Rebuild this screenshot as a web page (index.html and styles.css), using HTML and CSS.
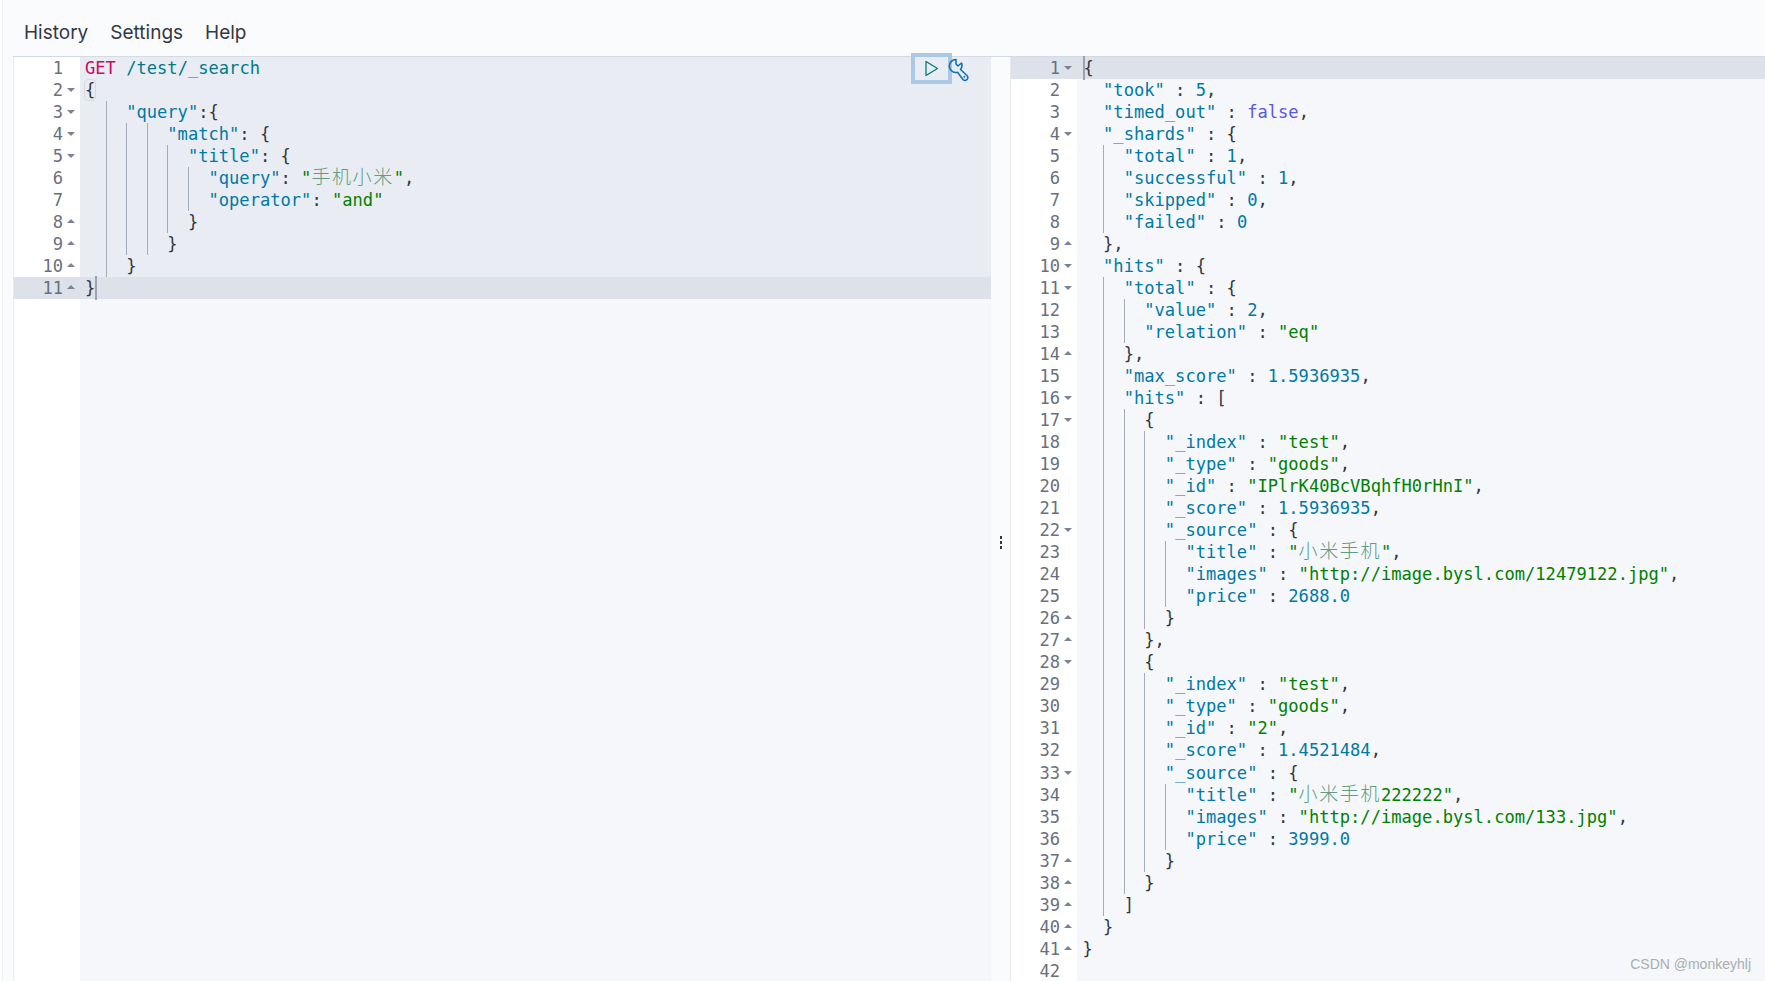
FILE: index.html
```html
<!DOCTYPE html>
<html lang="en">
<head>
    <meta charset="UTF-8">
    <title>Console - Dev Tools</title>
    <link rel="stylesheet" href="styles.css">
</head>
<body>
<div class="app">
    <div class="menu">
        <span>History</span>
        <span>Settings</span>
        <span>Help</span>
    </div>
    <div class="panes">
        <div class="pane left">
            <div class="row sel"><span class="gut"><span>1</span><i class="fd"></i></span><span class="code"><span class="tx"><span class="m">GET</span> <span class="u">/test/_search</span></span></span></div>
            <div class="row sel"><span class="gut"><span>2</span><i class="fd dn"></i></span><span class="code"><span class="tx"><span class="br">{</span></span></span></div>
            <div class="row sel"><span class="gut"><span>3</span><i class="fd dn"></i></span><span class="code"><i class="t"></i><i class="t"></i><span class="tx"><span class="k">"query"</span>:{</span></span></div>
            <div class="row sel"><span class="gut"><span>4</span><i class="fd dn"></i></span><span class="code"><i class="t"></i><i class="t"></i><i class="t"></i><i class="t"></i><span class="tx"><span class="k">"match"</span>: {</span></span></div>
            <div class="row sel"><span class="gut"><span>5</span><i class="fd dn"></i></span><span class="code"><i class="t"></i><i class="t"></i><i class="t"></i><i class="t"></i><i class="t"></i><span class="tx"><span class="k">"title"</span>: {</span></span></div>
            <div class="row sel"><span class="gut"><span>6</span><i class="fd"></i></span><span class="code"><i class="t"></i><i class="t"></i><i class="t"></i><i class="t"></i><i class="t"></i><i class="t"></i><span class="tx"><span class="k">"query"</span>: <span class="s">"<span class="zh">手机小米</span>"</span>,</span></span></div>
            <div class="row sel"><span class="gut"><span>7</span><i class="fd"></i></span><span class="code"><i class="t"></i><i class="t"></i><i class="t"></i><i class="t"></i><i class="t"></i><i class="t"></i><span class="tx"><span class="k">"operator"</span>: <span class="s">"and"</span></span></span></div>
            <div class="row sel"><span class="gut"><span>8</span><i class="fd up"></i></span><span class="code"><i class="t"></i><i class="t"></i><i class="t"></i><i class="t"></i><i class="t"></i><span class="tx">}</span></span></div>
            <div class="row sel"><span class="gut"><span>9</span><i class="fd up"></i></span><span class="code"><i class="t"></i><i class="t"></i><i class="t"></i><i class="t"></i><span class="tx">}</span></span></div>
            <div class="row sel"><span class="gut"><span>10</span><i class="fd up"></i></span><span class="code"><i class="t"></i><i class="t"></i><span class="tx">}</span></span></div>
            <div class="row on"><span class="gut"><span>11</span><i class="fd up"></i></span><span class="code"><span class="tx">}<i class="cur"></i></span></span></div>

            <div class="actions">
                <span class="run">
                    <svg width="15" height="17" viewBox="0 0 15 17"><path d="M2 1.5v14L13.5 8.500z" fill="none" stroke="#017d73" stroke-width="1.3" stroke-linejoin="round"/></svg>
                </span>
                <svg class="wrench" width="24" height="24" viewBox="0 0 24 24" fill="none" stroke="#0f70b7" stroke-width="1.6" stroke-linejoin="round"><path d="M9 1.500V6l2 2 3.500-3A6.500 6.500 0 0 1 13.500 11.500L20 17.500A2.800 2.800 0 0 1 16 21.500L10.500 14.300A6.500 6.500 0 1 1 9 1.500z"/><circle cx="17.400" cy="18.800" r="1" fill="#0f70b7" stroke="none"/></svg>
            </div>
        </div>

        <div class="split"><i></i><i></i><i></i></div>

        <div class="pane right">
            <div class="row on"><span class="gut"><span>1</span><i class="fd dn"></i></span><span class="code"><span class="tx"><i class="cur"></i>{</span></span></div>
            <div class="row"><span class="gut"><span>2</span><i class="fd"></i></span><span class="code"><i class="t"></i><span class="tx"><span class="k">"took"</span> : <span class="k">5</span>,</span></span></div>
            <div class="row"><span class="gut"><span>3</span><i class="fd"></i></span><span class="code"><i class="t"></i><span class="tx"><span class="k">"timed_out"</span> : <span class="b">false</span>,</span></span></div>
            <div class="row"><span class="gut"><span>4</span><i class="fd dn"></i></span><span class="code"><i class="t"></i><span class="tx"><span class="k">"_shards"</span> : {</span></span></div>
            <div class="row"><span class="gut"><span>5</span><i class="fd"></i></span><span class="code"><i class="t"></i><i class="t"></i><span class="tx"><span class="k">"total"</span> : <span class="k">1</span>,</span></span></div>
            <div class="row"><span class="gut"><span>6</span><i class="fd"></i></span><span class="code"><i class="t"></i><i class="t"></i><span class="tx"><span class="k">"successful"</span> : <span class="k">1</span>,</span></span></div>
            <div class="row"><span class="gut"><span>7</span><i class="fd"></i></span><span class="code"><i class="t"></i><i class="t"></i><span class="tx"><span class="k">"skipped"</span> : <span class="k">0</span>,</span></span></div>
            <div class="row"><span class="gut"><span>8</span><i class="fd"></i></span><span class="code"><i class="t"></i><i class="t"></i><span class="tx"><span class="k">"failed"</span> : <span class="k">0</span></span></span></div>
            <div class="row"><span class="gut"><span>9</span><i class="fd up"></i></span><span class="code"><i class="t"></i><span class="tx">},</span></span></div>
            <div class="row"><span class="gut"><span>10</span><i class="fd dn"></i></span><span class="code"><i class="t"></i><span class="tx"><span class="k">"hits"</span> : {</span></span></div>
            <div class="row"><span class="gut"><span>11</span><i class="fd dn"></i></span><span class="code"><i class="t"></i><i class="t"></i><span class="tx"><span class="k">"total"</span> : {</span></span></div>
            <div class="row"><span class="gut"><span>12</span><i class="fd"></i></span><span class="code"><i class="t"></i><i class="t"></i><i class="t"></i><span class="tx"><span class="k">"value"</span> : <span class="k">2</span>,</span></span></div>
            <div class="row"><span class="gut"><span>13</span><i class="fd"></i></span><span class="code"><i class="t"></i><i class="t"></i><i class="t"></i><span class="tx"><span class="k">"relation"</span> : <span class="s">"eq"</span></span></span></div>
            <div class="row"><span class="gut"><span>14</span><i class="fd up"></i></span><span class="code"><i class="t"></i><i class="t"></i><span class="tx">},</span></span></div>
            <div class="row"><span class="gut"><span>15</span><i class="fd"></i></span><span class="code"><i class="t"></i><i class="t"></i><span class="tx"><span class="k">"max_score"</span> : <span class="k">1.5936935</span>,</span></span></div>
            <div class="row"><span class="gut"><span>16</span><i class="fd dn"></i></span><span class="code"><i class="t"></i><i class="t"></i><span class="tx"><span class="k">"hits"</span> : [</span></span></div>
            <div class="row"><span class="gut"><span>17</span><i class="fd dn"></i></span><span class="code"><i class="t"></i><i class="t"></i><i class="t"></i><span class="tx">{</span></span></div>
            <div class="row"><span class="gut"><span>18</span><i class="fd"></i></span><span class="code"><i class="t"></i><i class="t"></i><i class="t"></i><i class="t"></i><span class="tx"><span class="k">"_index"</span> : <span class="s">"test"</span>,</span></span></div>
            <div class="row"><span class="gut"><span>19</span><i class="fd"></i></span><span class="code"><i class="t"></i><i class="t"></i><i class="t"></i><i class="t"></i><span class="tx"><span class="k">"_type"</span> : <span class="s">"goods"</span>,</span></span></div>
            <div class="row"><span class="gut"><span>20</span><i class="fd"></i></span><span class="code"><i class="t"></i><i class="t"></i><i class="t"></i><i class="t"></i><span class="tx"><span class="k">"_id"</span> : <span class="s">"IPlrK40BcVBqhfH0rHnI"</span>,</span></span></div>
            <div class="row"><span class="gut"><span>21</span><i class="fd"></i></span><span class="code"><i class="t"></i><i class="t"></i><i class="t"></i><i class="t"></i><span class="tx"><span class="k">"_score"</span> : <span class="k">1.5936935</span>,</span></span></div>
            <div class="row"><span class="gut"><span>22</span><i class="fd dn"></i></span><span class="code"><i class="t"></i><i class="t"></i><i class="t"></i><i class="t"></i><span class="tx"><span class="k">"_source"</span> : {</span></span></div>
            <div class="row"><span class="gut"><span>23</span><i class="fd"></i></span><span class="code"><i class="t"></i><i class="t"></i><i class="t"></i><i class="t"></i><i class="t"></i><span class="tx"><span class="k">"title"</span> : <span class="s">"<span class="zh">小米手机</span>"</span>,</span></span></div>
            <div class="row"><span class="gut"><span>24</span><i class="fd"></i></span><span class="code"><i class="t"></i><i class="t"></i><i class="t"></i><i class="t"></i><i class="t"></i><span class="tx"><span class="k">"images"</span> : <span class="s">"http://image.bysl.com/12479122.jpg"</span>,</span></span></div>
            <div class="row"><span class="gut"><span>25</span><i class="fd"></i></span><span class="code"><i class="t"></i><i class="t"></i><i class="t"></i><i class="t"></i><i class="t"></i><span class="tx"><span class="k">"price"</span> : <span class="k">2688.0</span></span></span></div>
            <div class="row"><span class="gut"><span>26</span><i class="fd up"></i></span><span class="code"><i class="t"></i><i class="t"></i><i class="t"></i><i class="t"></i><span class="tx">}</span></span></div>
            <div class="row"><span class="gut"><span>27</span><i class="fd up"></i></span><span class="code"><i class="t"></i><i class="t"></i><i class="t"></i><span class="tx">},</span></span></div>
            <div class="row"><span class="gut"><span>28</span><i class="fd dn"></i></span><span class="code"><i class="t"></i><i class="t"></i><i class="t"></i><span class="tx">{</span></span></div>
            <div class="row"><span class="gut"><span>29</span><i class="fd"></i></span><span class="code"><i class="t"></i><i class="t"></i><i class="t"></i><i class="t"></i><span class="tx"><span class="k">"_index"</span> : <span class="s">"test"</span>,</span></span></div>
            <div class="row"><span class="gut"><span>30</span><i class="fd"></i></span><span class="code"><i class="t"></i><i class="t"></i><i class="t"></i><i class="t"></i><span class="tx"><span class="k">"_type"</span> : <span class="s">"goods"</span>,</span></span></div>
            <div class="row"><span class="gut"><span>31</span><i class="fd"></i></span><span class="code"><i class="t"></i><i class="t"></i><i class="t"></i><i class="t"></i><span class="tx"><span class="k">"_id"</span> : <span class="s">"2"</span>,</span></span></div>
            <div class="row"><span class="gut"><span>32</span><i class="fd"></i></span><span class="code"><i class="t"></i><i class="t"></i><i class="t"></i><i class="t"></i><span class="tx"><span class="k">"_score"</span> : <span class="k">1.4521484</span>,</span></span></div>
            <div class="row"><span class="gut"><span>33</span><i class="fd dn"></i></span><span class="code"><i class="t"></i><i class="t"></i><i class="t"></i><i class="t"></i><span class="tx"><span class="k">"_source"</span> : {</span></span></div>
            <div class="row"><span class="gut"><span>34</span><i class="fd"></i></span><span class="code"><i class="t"></i><i class="t"></i><i class="t"></i><i class="t"></i><i class="t"></i><span class="tx"><span class="k">"title"</span> : <span class="s">"<span class="zh">小米手机</span>222222"</span>,</span></span></div>
            <div class="row"><span class="gut"><span>35</span><i class="fd"></i></span><span class="code"><i class="t"></i><i class="t"></i><i class="t"></i><i class="t"></i><i class="t"></i><span class="tx"><span class="k">"images"</span> : <span class="s">"http://image.bysl.com/133.jpg"</span>,</span></span></div>
            <div class="row"><span class="gut"><span>36</span><i class="fd"></i></span><span class="code"><i class="t"></i><i class="t"></i><i class="t"></i><i class="t"></i><i class="t"></i><span class="tx"><span class="k">"price"</span> : <span class="k">3999.0</span></span></span></div>
            <div class="row"><span class="gut"><span>37</span><i class="fd up"></i></span><span class="code"><i class="t"></i><i class="t"></i><i class="t"></i><i class="t"></i><span class="tx">}</span></span></div>
            <div class="row"><span class="gut"><span>38</span><i class="fd up"></i></span><span class="code"><i class="t"></i><i class="t"></i><i class="t"></i><span class="tx">}</span></span></div>
            <div class="row"><span class="gut"><span>39</span><i class="fd up"></i></span><span class="code"><i class="t"></i><i class="t"></i><span class="tx">]</span></span></div>
            <div class="row"><span class="gut"><span>40</span><i class="fd up"></i></span><span class="code"><i class="t"></i><span class="tx">}</span></span></div>
            <div class="row"><span class="gut"><span>41</span><i class="fd up"></i></span><span class="code"><span class="tx">}</span></span></div>
            <div class="row"><span class="gut"><span>42</span><i class="fd"></i></span><span class="code"></span></div>

            <div class="mark">CSDN @monkeyhlj</div>
        </div>
    </div>
</div>
</body>
</html>
```

FILE: styles.css
```css
html, body {
    height: 100%;
    margin: 0;
    overflow: hidden;
    background: #fff;
}

.app {
    height: 100%;
    margin-left: 2px;
    padding-left: 10px;
    display: flex;
    flex-direction: column;
    background: #fafbfd;
    border-left: 1px solid #eef0f4;
    box-sizing: border-box;
}

.menu {
    height: 56px;
    flex: none;
    display: flex;
    align-items: center;
    gap: 22px;
    padding: 8px 0 0 11px;
    box-sizing: border-box;
    font-family: Inter, sans-serif;
    font-size: 19px;
    color: #343741;
}

.panes {
    flex: 1;
    min-height: 0;
    display: flex;
    border-top: 1px solid #d3dae6;
}

/* editor panes */
.pane {
    position: relative;
    background: linear-gradient(90deg, #fff 66px, #f5f7fa 66px);
    font-family: "DejaVu Sans Mono", monospace;
    font-size: 17.1px;
    line-height: 22px;
    color: #343741;
}

.left {
    width: 978px;
    flex: none;
    border-left: 1px solid #e6e9f0;
    box-sizing: border-box;
}

.right {
    flex: 1;
    border-left: 1px solid #e6e9f0;
}

.right .code {
    padding-left: 5.5px;
}

.split {
    width: 19px;
    flex: none;
    display: flex;
    flex-direction: column;
    align-items: center;
    justify-content: center;
    gap: 2px;
    margin-top: 47px;
}

.split i {
    width: 2px;
    height: 3px;
    background: #343741;
}

.row {
    height: 22.03px;
    display: flex;
}

.gut {
    width: 66px;
    flex: none;
    display: flex;
    justify-content: flex-end;
    color: #69707d;
}

.fd {
    width: 17px;
    flex: none;
}

.dn::after, .up::after {
    content: "";
    display: block;
    width: 0;
    margin: 9px 0 0 4px;
    border-left: 4px solid transparent;
    border-right: 4px solid transparent;
}

.dn::after {
    border-top: 4px solid #7b8290;
}

.up::after {
    margin-top: 8px;
    border-bottom: 4px solid #7b8290;
}

.code {
    flex: 1;
    display: flex;
    padding-left: 5px;
    min-width: 0;
}

.t {
    width: 2ch;
    flex: none;
    box-sizing: border-box;
}

.t + .t {
    border-left: 1px solid #a5acb9;
}

.tx {
    white-space: pre;
}

.sel .code {
    background: #e9edf3;
}

.on {
    background: #dde2ea;
}

.cur {
    display: inline-block;
    width: 0;
    height: 22px;
    vertical-align: top;
    box-shadow: 0 0 0 1px #98a2b3;
    margin-left: 1px;
}

.br {
    outline: 1px solid #d3dae6;
    border-radius: 3px;
}

/* token colours */
.m { color: #c80a68; }
.u { color: #00798a; }
.k { color: #0079a5; }
.s { color: #017f01; }
.b { color: #5a55e0; }

.zh {
    font-family: "Noto Sans CJK SC", sans-serif;
    font-size: 19px;
    font-weight: 300;
    line-height: 0;
    letter-spacing: 1.59px;
    color: #5f9d80;
}

/* run and wrench buttons over the request */
.actions {
    position: absolute;
    top: -4px;
    left: 897px;
    display: flex;
    align-items: center;
}

.run {
    width: 41px;
    height: 31px;
    display: flex;
    align-items: center;
    justify-content: center;
    border: 4px solid #a9c9e4;
    box-sizing: border-box;
}

.wrench {
    margin: 3px 0 0 -5px;
}

.mark {
    position: absolute;
    right: 14px;
    bottom: 9px;
    font-family: "Liberation Sans", sans-serif;
    font-size: 14px;
    line-height: 16px;
    color: #a9adb3;
}
```
